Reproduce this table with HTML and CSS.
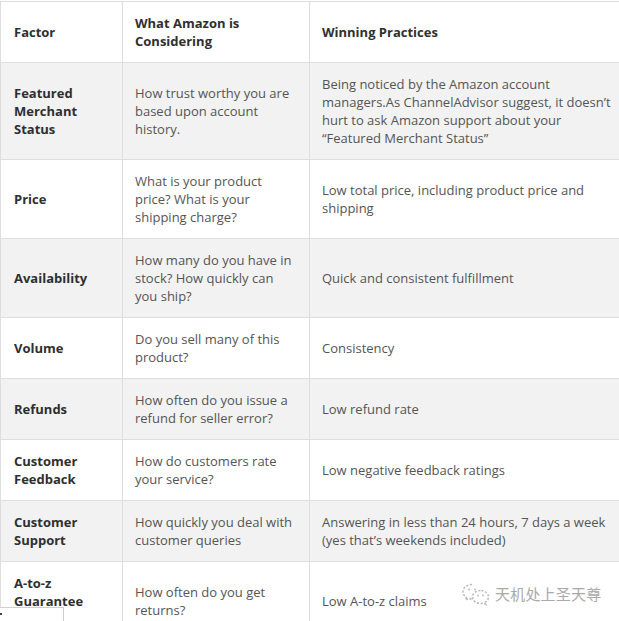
FILE: index.html
```html
<!DOCTYPE html>
<html lang="en">
<head>
<meta charset="utf-8">
<title>Amazon Buy Box Factors</title>
<link rel="stylesheet" href="styles.css">
</head>
<body>
<table class="factors">
  <colgroup>
    <col class="c-factor">
    <col class="c-consider">
    <col class="c-practice">
  </colgroup>
  <thead>
    <tr>
      <th>Factor</th>
      <th>What Amazon is Considering</th>
      <th>Winning Practices</th>
    </tr>
  </thead>
  <tbody>
    <tr class="alt">
      <td class="name">Featured Merchant Status</td>
      <td>How trust worthy you are based upon account history.</td>
      <td>Being noticed by the Amazon account managers.As ChannelAdvisor suggest, it doesn’t hurt to ask Amazon support about your “Featured Merchant Status”</td>
    </tr>
    <tr>
      <td class="name">Price</td>
      <td>What is your product price? What is your shipping charge?</td>
      <td>Low total price, including product price and shipping</td>
    </tr>
    <tr class="alt">
      <td class="name">Availability</td>
      <td>How many do you have in stock? How quickly can you ship?</td>
      <td>Quick and consistent fulfillment</td>
    </tr>
    <tr>
      <td class="name">Volume</td>
      <td>Do you sell many of this product?</td>
      <td>Consistency</td>
    </tr>
    <tr class="alt">
      <td class="name">Refunds</td>
      <td>How often do you issue a refund for seller error?</td>
      <td>Low refund rate</td>
    </tr>
    <tr>
      <td class="name">Customer Feedback</td>
      <td>How do customers rate your service?</td>
      <td>Low negative feedback ratings</td>
    </tr>
    <tr class="alt">
      <td class="name">Customer Support</td>
      <td>How quickly you deal with customer queries</td>
      <td>Answering in less than 24 hours, 7 days a week (yes that’s weekends included)</td>
    </tr>
    <tr class="tall">
      <td class="name top">A-to-z Guarantee</td>
      <td>How often do you get returns?</td>
      <td>Low A-to-z claims</td>
    </tr>
  </tbody>
</table>

<div class="watermark">
  <svg class="wm-icon" width="30" height="24" viewBox="0 0 30 24" aria-hidden="true">
    <g fill="none" stroke="#bdbdbd" stroke-width="1.6" stroke-dasharray="2.2 1.6">
      <path d="M11 2.5c-5 0-9 3.2-9 7.2 0 2.3 1.300 4.3 3.3 5.6l-0.8 2.7 3.2-1.6c1 .3 2.1.5 3.3.5"/>
      <path d="M19.5 8.5c-4.4 0-8 2.9-8 6.5s3.6 6.5 8 6.5c1 0 1.9-.1 2.8-.4l2.8 1.4-.7-2.4c1.900-1.2 3.1-3 3.1-5.1 0-3.6-3.6-6.5-8-6.5z"/>
    </g>
    <circle cx="8" cy="7.5" r="1" fill="#bdbdbd"/>
    <circle cx="14" cy="7.5" r="1" fill="#bdbdbd"/>
    <circle cx="17" cy="13.5" r="0.9" fill="#bdbdbd"/>
    <circle cx="22" cy="13.5" r="0.9" fill="#bdbdbd"/>
  </svg>
  <span class="wm-text">天机处上圣天尊</span>
</div>

<div class="corner-box"></div>
</body>
</html>
```

FILE: styles.css
```css
html, body {
  margin: 0;
  padding: 0;
  background: #ffffff;
  overflow: hidden;
}

body {
  padding-top: 1px;
  font-family: "Open Sans", "Liberation Sans", sans-serif;
  font-size: 13px;
  line-height: 18px;
  color: #555555;
  position: relative;
  height: 620px;
}

.factors {
  width: 619px;
  border-collapse: collapse;
  table-layout: fixed;
}

.c-factor { width: 122px; }
.c-consider { width: 187px; }

.factors th,
.factors td {
  border: 1px solid #dedede;
  padding: 12px 12px 12px 13px;
  text-align: left;
  vertical-align: middle;
}

.factors th:last-child,
.factors td:last-child {
  border-right: none;
  padding-right: 4px;
  padding-left: 12px;
}

.factors th:nth-child(2),
.factors td:nth-child(2) {
  padding-left: 12px;
}

.factors th {
  font-weight: 700;
  color: #2f2f2f;
}

.factors td.name {
  font-weight: 700;
  color: #2f2f2f;
}

.factors td.top {
  vertical-align: top;
}

.factors tr.alt td {
  background: #f2f2f2;
}

.factors tr.tall {
  height: 79px;
}

.watermark {
  position: absolute;
  left: 461px;
  top: 582px;
  display: flex;
  align-items: center;
  gap: 4px;
}

.wm-text {
  font-family: "Noto Sans CJK SC", "Noto Sans", sans-serif;
  font-size: 15px;
  line-height: 20px;
  color: #a9a9a9;
  letter-spacing: 0.2px;
}

.corner-box {
  position: absolute;
  left: 0;
  top: 607px;
  width: 63px;
  height: 20px;
  background: #ffffff;
  border-top: 1px solid #cfcfcf;
  border-right: 1px solid #cfcfcf;
}

.corner-box::before {
  content: "";
  position: absolute;
  left: 0;
  top: 5px;
  width: 2px;
  height: 2px;
  background: #444444;
}
```
